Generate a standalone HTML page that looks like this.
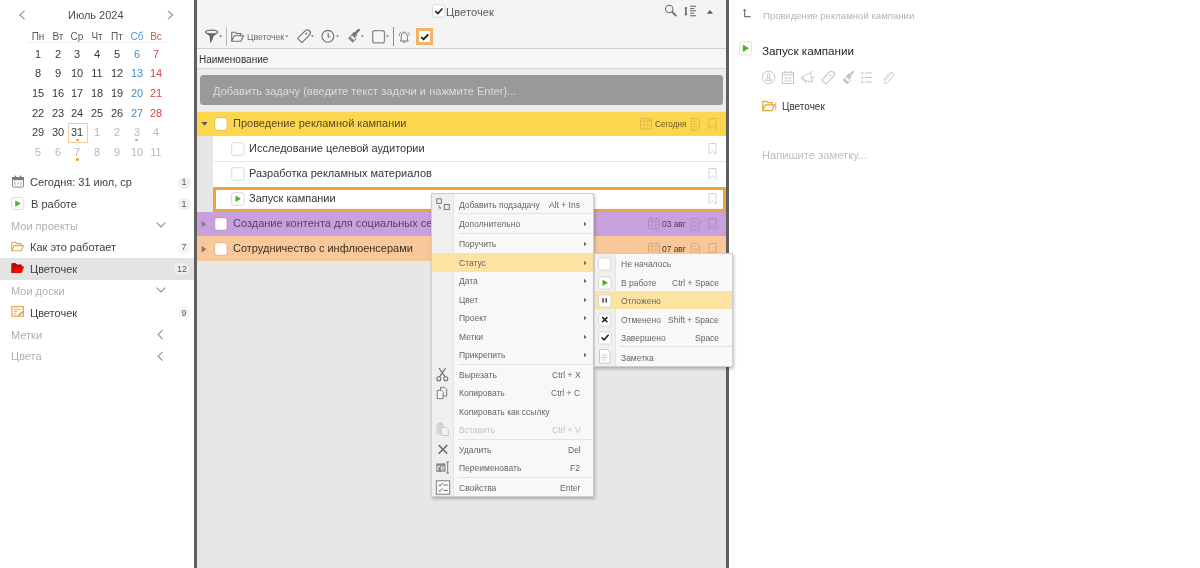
<!DOCTYPE html>
<html><head><meta charset="utf-8"><style>
html,body{margin:0;padding:0;width:1200px;height:568px;overflow:hidden;background:#fff;font-family:"Liberation Sans", sans-serif;}
.t{position:absolute;white-space:nowrap;will-change:transform;}
svg{overflow:visible}
</style></head><body>
<div style="position:absolute;left:0px;top:0px;width:194px;height:568px;background:#fff"></div>
<div style="position:absolute;left:194px;top:0px;width:3px;height:568px;background:#5f5f5f"></div>
<div style="position:absolute;left:197px;top:0px;width:529px;height:568px;background:#e7e7e7"></div>
<div style="position:absolute;left:726px;top:0px;width:3px;height:568px;background:#5f5f5f"></div>
<div style="position:absolute;left:729px;top:0px;width:471px;height:568px;background:#fff"></div>
<svg style="position:absolute;left:15px;top:8px" width="15" height="14" viewBox="15 8 15 14"><polyline points="24.6,10.8 19.8,15 24.6,19.2" fill="none" stroke="#8f8f8f" stroke-width="1.1"/></svg>
<svg style="position:absolute;left:163px;top:8px" width="15" height="14" viewBox="163 8 15 14"><polyline points="167.8,10.8 172.6,15 167.8,19.2" fill="none" stroke="#8f8f8f" stroke-width="1.1"/></svg>
<div class="t" style="left:68.3px;top:9.69px;font-size:11px;line-height:11px;color:#4d4d4d;">Июль 2024</div>
<div class="t" style="left:-62.0px;width:200px;text-align:center;top:32.03px;font-size:10px;line-height:10px;color:#5a5a5a;">Пн</div>
<div class="t" style="left:-42.3px;width:200px;text-align:center;top:32.03px;font-size:10px;line-height:10px;color:#5a5a5a;">Вт</div>
<div class="t" style="left:-22.6px;width:200px;text-align:center;top:32.03px;font-size:10px;line-height:10px;color:#5a5a5a;">Ср</div>
<div class="t" style="left:-2.9px;width:200px;text-align:center;top:32.03px;font-size:10px;line-height:10px;color:#5a5a5a;">Чт</div>
<div class="t" style="left:16.8px;width:200px;text-align:center;top:32.03px;font-size:10px;line-height:10px;color:#5a5a5a;">Пт</div>
<div class="t" style="left:36.5px;width:200px;text-align:center;top:32.03px;font-size:10px;line-height:10px;color:#4a95cc;">Сб</div>
<div class="t" style="left:56.2px;width:200px;text-align:center;top:32.03px;font-size:10px;line-height:10px;color:#d9534f;">Вс</div>
<div style="position:absolute;left:27px;top:42px;width:140px;height:1px;background:#efefef"></div>
<div style="position:absolute;left:67.5px;top:123px;width:20px;height:20px;box-sizing:border-box;border:1px solid #f3cba6"></div>
<div class="t" style="left:-62.0px;width:200px;text-align:center;top:48.69px;font-size:11px;line-height:11px;color:#383838;">1</div>
<div class="t" style="left:-42.3px;width:200px;text-align:center;top:48.69px;font-size:11px;line-height:11px;color:#383838;">2</div>
<div class="t" style="left:-22.6px;width:200px;text-align:center;top:48.69px;font-size:11px;line-height:11px;color:#383838;">3</div>
<div class="t" style="left:-2.9px;width:200px;text-align:center;top:48.69px;font-size:11px;line-height:11px;color:#383838;">4</div>
<div class="t" style="left:16.8px;width:200px;text-align:center;top:48.69px;font-size:11px;line-height:11px;color:#383838;">5</div>
<div class="t" style="left:36.5px;width:200px;text-align:center;top:48.69px;font-size:11px;line-height:11px;color:#3f8fc9;">6</div>
<div class="t" style="left:56.2px;width:200px;text-align:center;top:48.69px;font-size:11px;line-height:11px;color:#d5474a;">7</div>
<div class="t" style="left:-62.0px;width:200px;text-align:center;top:68.39px;font-size:11px;line-height:11px;color:#383838;">8</div>
<div class="t" style="left:-42.3px;width:200px;text-align:center;top:68.39px;font-size:11px;line-height:11px;color:#383838;">9</div>
<div class="t" style="left:-22.6px;width:200px;text-align:center;top:68.39px;font-size:11px;line-height:11px;color:#383838;">10</div>
<div class="t" style="left:-2.9px;width:200px;text-align:center;top:68.39px;font-size:11px;line-height:11px;color:#383838;">11</div>
<div class="t" style="left:16.8px;width:200px;text-align:center;top:68.39px;font-size:11px;line-height:11px;color:#383838;">12</div>
<div class="t" style="left:36.5px;width:200px;text-align:center;top:68.39px;font-size:11px;line-height:11px;color:#3f8fc9;">13</div>
<div class="t" style="left:56.2px;width:200px;text-align:center;top:68.39px;font-size:11px;line-height:11px;color:#d5474a;">14</div>
<div class="t" style="left:-62.0px;width:200px;text-align:center;top:88.09px;font-size:11px;line-height:11px;color:#383838;">15</div>
<div class="t" style="left:-42.3px;width:200px;text-align:center;top:88.09px;font-size:11px;line-height:11px;color:#383838;">16</div>
<div class="t" style="left:-22.6px;width:200px;text-align:center;top:88.09px;font-size:11px;line-height:11px;color:#383838;">17</div>
<div class="t" style="left:-2.9px;width:200px;text-align:center;top:88.09px;font-size:11px;line-height:11px;color:#383838;">18</div>
<div class="t" style="left:16.8px;width:200px;text-align:center;top:88.09px;font-size:11px;line-height:11px;color:#383838;">19</div>
<div class="t" style="left:36.5px;width:200px;text-align:center;top:88.09px;font-size:11px;line-height:11px;color:#3f8fc9;">20</div>
<div class="t" style="left:56.2px;width:200px;text-align:center;top:88.09px;font-size:11px;line-height:11px;color:#d5474a;">21</div>
<div class="t" style="left:-62.0px;width:200px;text-align:center;top:107.79px;font-size:11px;line-height:11px;color:#383838;">22</div>
<div class="t" style="left:-42.3px;width:200px;text-align:center;top:107.79px;font-size:11px;line-height:11px;color:#383838;">23</div>
<div class="t" style="left:-22.6px;width:200px;text-align:center;top:107.79px;font-size:11px;line-height:11px;color:#383838;">24</div>
<div class="t" style="left:-2.9px;width:200px;text-align:center;top:107.79px;font-size:11px;line-height:11px;color:#383838;">25</div>
<div class="t" style="left:16.8px;width:200px;text-align:center;top:107.79px;font-size:11px;line-height:11px;color:#383838;">26</div>
<div class="t" style="left:36.5px;width:200px;text-align:center;top:107.79px;font-size:11px;line-height:11px;color:#3f8fc9;">27</div>
<div class="t" style="left:56.2px;width:200px;text-align:center;top:107.79px;font-size:11px;line-height:11px;color:#d5474a;">28</div>
<div class="t" style="left:-62.0px;width:200px;text-align:center;top:127.49px;font-size:11px;line-height:11px;color:#383838;">29</div>
<div class="t" style="left:-42.3px;width:200px;text-align:center;top:127.49px;font-size:11px;line-height:11px;color:#383838;">30</div>
<div class="t" style="left:-22.6px;width:200px;text-align:center;top:127.49px;font-size:11px;line-height:11px;color:#383838;">31</div>
<div class="t" style="left:-2.9px;width:200px;text-align:center;top:127.49px;font-size:11px;line-height:11px;color:#b9b9b9;">1</div>
<div class="t" style="left:16.8px;width:200px;text-align:center;top:127.49px;font-size:11px;line-height:11px;color:#b9b9b9;">2</div>
<div class="t" style="left:36.5px;width:200px;text-align:center;top:127.49px;font-size:11px;line-height:11px;color:#b9b9b9;">3</div>
<div class="t" style="left:56.2px;width:200px;text-align:center;top:127.49px;font-size:11px;line-height:11px;color:#b9b9b9;">4</div>
<div class="t" style="left:-62.0px;width:200px;text-align:center;top:147.19px;font-size:11px;line-height:11px;color:#b9b9b9;">5</div>
<div class="t" style="left:-42.3px;width:200px;text-align:center;top:147.19px;font-size:11px;line-height:11px;color:#b9b9b9;">6</div>
<div class="t" style="left:-22.6px;width:200px;text-align:center;top:147.19px;font-size:11px;line-height:11px;color:#b9b9b9;">7</div>
<div class="t" style="left:-2.9px;width:200px;text-align:center;top:147.19px;font-size:11px;line-height:11px;color:#b9b9b9;">8</div>
<div class="t" style="left:16.8px;width:200px;text-align:center;top:147.19px;font-size:11px;line-height:11px;color:#b9b9b9;">9</div>
<div class="t" style="left:36.5px;width:200px;text-align:center;top:147.19px;font-size:11px;line-height:11px;color:#b9b9b9;">10</div>
<div class="t" style="left:56.2px;width:200px;text-align:center;top:147.19px;font-size:11px;line-height:11px;color:#b9b9b9;">11</div>
<div style="position:absolute;left:76.15px;top:138.75px;width:2.5px;height:2.5px;background:#f39a35;border-radius:50%"></div>
<div style="position:absolute;left:135.25px;top:138.75px;width:2.5px;height:2.5px;background:#f39a35;border-radius:50%"></div>
<div style="position:absolute;left:76.15px;top:158.25px;width:2.5px;height:2.5px;background:#f39a35;border-radius:50%"></div>
<svg style="position:absolute;left:10px;top:174px" width="16" height="16" viewBox="10 174 16 16"><rect x="12.5" y="177.5" width="11" height="9.6" rx="1" fill="#fff" stroke="#8a8a8a" stroke-width="1"/><rect x="12" y="177" width="12" height="3.2" fill="#7d7d7d"/><rect x="14.6" y="175.6" width="1.6" height="2.4" fill="#7d7d7d"/><rect x="19.8" y="175.6" width="1.6" height="2.4" fill="#7d7d7d"/><rect x="14.5" y="181.5" width="1.2" height="4" fill="#bbb"/><rect x="20.3" y="181.5" width="1.2" height="4" fill="#bbb"/><rect x="17.3" y="182.5" width="1.4" height="2" fill="#bbb"/></svg>
<div class="t" style="left:30.2px;top:177.19px;font-size:11px;line-height:11px;color:#404040;">Сегодня: 31 июл, ср</div>
<div style="position:absolute;left:177.8px;top:176.5px;width:13px;height:12px;background:#efefef;border-radius:6px"></div>
<div class="t" style="left:84.3px;width:200px;text-align:center;top:178.18px;font-size:9px;line-height:9px;color:#5a5a5a;">1</div>
<svg style="position:absolute;left:10px;top:196px" width="16" height="15" viewBox="10 196 16 15"><rect x="11.7" y="197.5" width="12" height="12" rx="2" fill="#fff" stroke="#dedede"/><polygon points="15.2,200.4 21,203.6 15.2,206.8" fill="#4cb324"/></svg>
<div class="t" style="left:30.5px;top:198.99px;font-size:11px;line-height:11px;color:#404040;">В работе</div>
<div style="position:absolute;left:177.8px;top:198px;width:13px;height:12px;background:#efefef;border-radius:6px"></div>
<div class="t" style="left:84.3px;width:200px;text-align:center;top:199.68px;font-size:9px;line-height:9px;color:#5a5a5a;">1</div>
<div class="t" style="left:11.0px;top:220.99px;font-size:11px;line-height:11px;color:#b0b0b0;">Мои проекты</div>
<svg style="position:absolute;left:154px;top:220px" width="14" height="10" viewBox="154 220 14 10"><polyline points="156.6,222.6 161,227 165.4,222.6" fill="none" stroke="#8f8f8f" stroke-width="1.1"/></svg>
<svg style="position:absolute;left:10px;top:240px" width="16" height="13" viewBox="10 240 16 13"><path d="M11.8 250.8 V242.3 H15.6 L16.7 243.6 H21.2 V245.6 M11.8 250.8 L14 245.6 H23.4 L21.2 250.8 Z" fill="none" stroke="#e3a546" stroke-width="1.1" stroke-linejoin="round"/></svg>
<div class="t" style="left:30.4px;top:242.39px;font-size:11px;line-height:11px;color:#404040;">Как это работает</div>
<div style="position:absolute;left:177.8px;top:241.5px;width:13px;height:12px;background:#f6f6f6;border-radius:6px"></div>
<div class="t" style="left:84.3px;width:200px;text-align:center;top:243.18px;font-size:9px;line-height:9px;color:#5a5a5a;">7</div>
<div style="position:absolute;left:0px;top:258px;width:194px;height:22px;background:#e3e3e3"></div>
<svg style="position:absolute;left:10px;top:262px" width="16" height="12" viewBox="10 262 16 12"><path d="M11.8 272.5 V263.6 H15.8 L16.9 264.9 H21.4 V266.8 H14 Z" fill="#c00" stroke="#a00" stroke-width="0.8"/><path d="M11.8 272.5 L14 266.8 H23.6 L21.4 272.5 Z" fill="#f00" stroke="#b00" stroke-width="0.8" stroke-linejoin="round"/></svg>
<div class="t" style="left:30.4px;top:263.99px;font-size:11px;line-height:11px;color:#404040;">Цветочек</div>
<div style="position:absolute;left:174.0px;top:263px;width:15px;height:12px;background:#efefef;border-radius:6px"></div>
<div class="t" style="left:81.5px;width:200px;text-align:center;top:264.68px;font-size:9px;line-height:9px;color:#5a5a5a;">12</div>
<div class="t" style="left:11.0px;top:286.19px;font-size:11px;line-height:11px;color:#b0b0b0;">Мои доски</div>
<svg style="position:absolute;left:154px;top:285px" width="14" height="10" viewBox="154 285 14 10"><polyline points="156.6,287.6 161,292 165.4,287.6" fill="none" stroke="#8f8f8f" stroke-width="1.1"/></svg>
<svg style="position:absolute;left:10px;top:305px" width="16" height="14" viewBox="10 305 16 14"><rect x="11.8" y="306.6" width="11.6" height="9.6" fill="#fff6e3" stroke="#e3a546" stroke-width="1.1"/><path d="M13.8 309.3 H20.5 M13.8 311.6 H17 M13.8 313.8 H16" stroke="#d9a050" stroke-width="0.9"/><path d="M18 315 L22.5 311 L23.5 312 L19 316 Z" fill="#c99a5a"/></svg>
<div class="t" style="left:30.4px;top:307.99px;font-size:11px;line-height:11px;color:#404040;">Цветочек</div>
<div style="position:absolute;left:177.8px;top:307px;width:13px;height:12px;background:#f6f6f6;border-radius:6px"></div>
<div class="t" style="left:84.3px;width:200px;text-align:center;top:308.68px;font-size:9px;line-height:9px;color:#5a5a5a;">9</div>
<div class="t" style="left:11.0px;top:329.89px;font-size:11px;line-height:11px;color:#b0b0b0;">Метки</div>
<svg style="position:absolute;left:155px;top:328px" width="11" height="13" viewBox="155 328 11 13"><polyline points="162.5,330.2 158.1,334.6 162.5,339" fill="none" stroke="#8f8f8f" stroke-width="1.1"/></svg>
<div class="t" style="left:11.0px;top:351.19px;font-size:11px;line-height:11px;color:#b0b0b0;">Цвета</div>
<svg style="position:absolute;left:155px;top:350px" width="11" height="13" viewBox="155 350 11 13"><polyline points="162.5,351.8 158.1,356.2 162.5,360.6" fill="none" stroke="#8f8f8f" stroke-width="1.1"/></svg>
<div style="position:absolute;left:197px;top:0px;width:529px;height:48px;background:#f4f4f4"></div>
<div style="position:absolute;left:197px;top:48px;width:529px;height:1px;background:#d0d0d0"></div>
<div style="position:absolute;left:197px;top:49px;width:529px;height:19px;background:#f6f6f6"></div>
<div style="position:absolute;left:197px;top:68px;width:529px;height:1px;background:#d6d6d6"></div>
<div style="position:absolute;left:197px;top:69px;width:529px;height:42px;background:#ededed"></div>
<div class="t" style="left:199.0px;top:55.33px;font-size:10px;line-height:10px;color:#333;">Наименование</div>
<svg style="position:absolute;left:431px;top:3px" width="16" height="16" viewBox="431 3 16 16"><rect x="432.5" y="4.8" width="12.4" height="12.4" rx="2" fill="#fff" stroke="#d9d9d9"/><polyline points="435.3,11.1 437.9,13.6 442.4,8.4" fill="none" stroke="#222" stroke-width="1.6"/></svg>
<div class="t" style="left:445.8px;top:6.92px;font-size:11.2px;line-height:11.2px;color:#5a5a5a;">Цветочек</div>
<svg style="position:absolute;left:663px;top:3px" width="16" height="16" viewBox="663 3 16 16"><circle cx="669.2" cy="9" r="3.7" fill="none" stroke="#6f6f6f" stroke-width="1.1"/><line x1="671.9" y1="11.7" x2="676.2" y2="16" stroke="#6f6f6f" stroke-width="1.9"/></svg>
<svg style="position:absolute;left:683px;top:4px" width="15" height="14" viewBox="683 4 15 14"><rect x="685" y="8" width="1.7" height="6.5" fill="#6f6f6f"/><ellipse cx="685.85" cy="8" rx="1.3" ry="1.1" fill="#6f6f6f"/><ellipse cx="685.85" cy="14.5" rx="1.3" ry="1.1" fill="#6f6f6f"/><rect x="690" y="5.7" width="6" height="1.1" fill="#6f6f6f"/><rect x="690" y="8" width="4.2" height="1" fill="#6f6f6f"/><rect x="690" y="10.2" width="6" height="1.1" fill="#6f6f6f"/><rect x="690" y="12.7" width="4.2" height="1" fill="#6f6f6f"/><rect x="690" y="15.2" width="6" height="1.1" fill="#6f6f6f"/></svg>
<svg style="position:absolute;left:705px;top:8px" width="10" height="7" viewBox="705 8 10 7"><polygon points="706.8,13.7 709.9,10 713,13.7" fill="#5a5a5a"/></svg>
<svg style="position:absolute;left:203px;top:28px" width="21" height="17" viewBox="203 28 21 17"><path d="M205.8 32.4 Q208 35 209.6 36 L210.2 43.3 Q212.6 41 213.6 36 Q215.8 34.6 217.6 32.4 Q211.7 35.4 205.8 32.4 Z" fill="#676767"/><ellipse cx="211.7" cy="32" rx="6.1" ry="1.9" fill="#eee" stroke="#6a6a6a" stroke-width="1.2"/><polygon points="219.2,35.6 222.0,35.6 220.6,37.300000000000004" fill="#666"/></svg>
<div style="position:absolute;left:226px;top:27px;width:1px;height:19px;background:#b8b8b8"></div>
<svg style="position:absolute;left:229px;top:29px" width="17" height="15" viewBox="229 29 17 15"><path d="M231.7 41.2 V32.3 H235.6 L236.7 33.6 H240.9 V35.8 M231.7 41.2 L234.2 35.8 H243.5 L241 41.2 Z" fill="none" stroke="#707070" stroke-width="1.1" stroke-linejoin="round"/></svg>
<div class="t" style="left:246.5px;top:32.84px;font-size:8.7px;line-height:8.7px;color:#6a6a6a;">Цветочек</div>
<svg style="position:absolute;left:284px;top:34px" width="6" height="4" viewBox="284 34 6 4"><polygon points="285.6,35.6 288.40000000000003,35.6 287.0,37.300000000000004" fill="#666"/></svg>
<svg style="position:absolute;left:295px;top:28px" width="21" height="17" viewBox="295 28 21 17"><path d="M297.6 38.3 L305.3 30.6 A3.05 3.05 0 0 1 309.6 34.9 L301.9 42.6 Z" fill="none" stroke="#707070" stroke-width="1.1" stroke-linejoin="round"/><circle cx="306.4" cy="33.7" r="0.9" fill="#707070"/><polygon points="311,35.6 313.8,35.6 312.4,37.300000000000004" fill="#666"/></svg>
<svg style="position:absolute;left:320px;top:28px" width="21" height="17" viewBox="320 28 21 17"><circle cx="327.9" cy="36.3" r="5.9" fill="none" stroke="#707070" stroke-width="1.1"/><path d="M328.2 33.1 V37 H330.4" fill="none" stroke="#707070" stroke-width="1.2"/><polygon points="336.1,35.6 338.90000000000003,35.6 337.5,37.300000000000004" fill="#666"/></svg>
<svg style="position:absolute;left:346px;top:28px" width="20" height="17" viewBox="346 28 20 17"><path d="M348.6 38.2 L352 34.8 L356 38.8 L352.6 42.2 Z" fill="#f4f4f4" stroke="#707070" stroke-width="1"/><path d="M350.3 36.5 L354.3 40.5 L352.6 42.2 L348.6 38.2 Z" fill="#8a8a8a"/><path d="M351.5 34.2 L354 31.7 L357.3 35 L354.8 37.5 Z" fill="#7a7a7a"/><line x1="355.5" y1="33.2" x2="358.8" y2="29.9" stroke="#6a6a6a" stroke-width="2.2" stroke-linecap="round"/><polygon points="361,35.6 363.8,35.6 362.4,37.300000000000004" fill="#666"/></svg>
<svg style="position:absolute;left:370px;top:28px" width="21" height="17" viewBox="370 28 21 17"><rect x="372.7" y="30.7" width="11.8" height="12.2" rx="2.2" fill="#f6f6f6" stroke="#8a8a8a" stroke-width="1.3"/><polygon points="386,35.6 388.8,35.6 387.4,37.300000000000004" fill="#666"/></svg>
<div style="position:absolute;left:393px;top:27px;width:1px;height:19px;background:#8a8a8a"></div>
<svg style="position:absolute;left:397px;top:29px" width="15" height="16" viewBox="397 29 15 16"><path d="M400.3 41 L401.2 40 V36.6 Q401.2 32.6 404.3 32.4 Q407.4 32.6 407.4 36.6 V40 L408.3 41 Z" fill="#f6f6f6" stroke="#707070" stroke-width="0.95" stroke-linejoin="round"/><path d="M403 42.1 H405.6" stroke="#707070" stroke-width="1"/><path d="M404.3 32.4 V31.4" stroke="#707070" stroke-width="0.9"/><path d="M399.2 36 Q399.2 33.4 401 31.8 M409.4 36 Q409.4 33.4 407.6 31.8" fill="none" stroke="#888" stroke-width="0.9"/></svg>
<div style="position:absolute;left:416px;top:28px;width:17px;height:17px;box-sizing:border-box;background:#fffdf9;border:3px solid #f1b466"></div>
<svg style="position:absolute;left:418px;top:30px" width="13" height="13" viewBox="418 30 13 13"><polyline points="421.3,37.1 423.6,39.3 428.3,34.4" fill="none" stroke="#111" stroke-width="1.8"/></svg>
<div style="position:absolute;left:200px;top:75px;width:523px;height:30px;background:#999;border-radius:3.5px"></div>
<div class="t" style="left:212.8px;top:85.80px;font-size:11.1px;line-height:11.1px;color:#dcdcdc;">Добавить задачу (введите текст задачи и нажмите Enter)...</div>
<div style="position:absolute;left:197px;top:111.6px;width:529px;height:24.4px;background:#fcd64f"></div>
<svg style="position:absolute;left:200px;top:119px" width="10" height="9" viewBox="200 119 10 9"><polygon points="201.4,121.9 207.6,121.9 204.5,125.8" fill="#5a5a5a"/></svg>
<svg style="position:absolute;left:214px;top:117px" width="14" height="14" viewBox="214 117 14 14"><rect x="214.7" y="117.7" width="12.4" height="12.6" rx="2.2" fill="#fff" stroke="#e3c055"/></svg>
<div class="t" style="left:232.5px;top:117.99px;font-size:11px;line-height:11px;color:#5a4a1e;">Проведение рекламной кампании</div>
<div style="position:absolute;left:213px;top:136px;width:513px;height:125px;background:#fff"></div>
<div style="position:absolute;left:213px;top:161px;width:513px;height:1px;background:#e6e6e6"></div>
<svg style="position:absolute;left:231px;top:142px" width="14" height="14" viewBox="231 142 14 14"><rect x="231.7" y="142.7" width="12.4" height="12.6" rx="2.2" fill="#fff" stroke="#d8d8d8"/></svg>
<div class="t" style="left:249.2px;top:143.19px;font-size:11px;line-height:11px;color:#363636;">Исследование целевой аудитории</div>
<svg style="position:absolute;left:231px;top:167px" width="14" height="14" viewBox="231 167 14 14"><rect x="231.7" y="167.7" width="12.4" height="12.6" rx="2.2" fill="#fff" stroke="#d8d8d8"/></svg>
<div class="t" style="left:249.2px;top:168.19px;font-size:11px;line-height:11px;color:#363636;">Разработка рекламных материалов</div>
<div style="position:absolute;left:213px;top:186.6px;width:513px;height:25px;box-sizing:border-box;border:3px solid #efa43b;background:#fff"></div>
<svg style="position:absolute;left:231px;top:192px" width="14" height="14" viewBox="231 192 14 14"><rect x="231.7" y="192.7" width="12.4" height="12.6" rx="2.2" fill="#fff" stroke="#d8d8d8"/><polygon points="235.5,195.6 241,198.8 235.5,202" fill="#4cb324"/></svg>
<div class="t" style="left:249.2px;top:193.19px;font-size:11px;line-height:11px;color:#363636;">Запуск кампании</div>
<div style="position:absolute;left:197px;top:211.6px;width:529px;height:24.8px;background:#c8a1dc"></div>
<svg style="position:absolute;left:199px;top:218px" width="9" height="12" viewBox="199 218 9 12"><polygon points="201.6,220.8 206.4,224.2 201.6,227.6" fill="#8a7a92"/></svg>
<svg style="position:absolute;left:214px;top:217px" width="14" height="14" viewBox="214 217 14 14"><rect x="214.7" y="217.7" width="12.4" height="12.6" rx="2.2" fill="#fff" stroke="#b890cc"/></svg>
<div class="t" style="left:232.5px;top:218.19px;font-size:11px;line-height:11px;color:#5a3d6c;">Создание контента для социальных сетей</div>
<div style="position:absolute;left:197px;top:236px;width:529px;height:25px;background:#f8c89b"></div>
<svg style="position:absolute;left:199px;top:243px" width="9" height="12" viewBox="199 243 9 12"><polygon points="201.6,245.8 206.4,249.2 201.6,252.6" fill="#8a7a6a"/></svg>
<svg style="position:absolute;left:214px;top:242px" width="14" height="14" viewBox="214 242 14 14"><rect x="214.7" y="242.7" width="12.4" height="12.6" rx="2.2" fill="#fff" stroke="#e6b285"/></svg>
<div class="t" style="left:232.5px;top:243.19px;font-size:11px;line-height:11px;color:#3a3020;">Сотрудничество с инфлюенсерами</div>
<svg style="position:absolute;left:640px;top:117px" width="13" height="14" viewBox="640 117 13 14"><rect x="640.5" y="118.5" width="11" height="10.5" rx="1" fill="none" stroke="#dbb94a"/><line x1="640.5" y1="121" x2="651.5" y2="121" stroke="#dbb94a"/><line x1="643" y1="117" x2="643" y2="119.5" stroke="#dbb94a"/><line x1="649" y1="117" x2="649" y2="119.5" stroke="#dbb94a"/><line x1="644.2" y1="121" x2="644.2" y2="129" stroke="#dbb94a" stroke-width="0.6"/><line x1="647.8" y1="121" x2="647.8" y2="129" stroke="#dbb94a" stroke-width="0.6"/><line x1="640.5" y1="125" x2="651.5" y2="125" stroke="#dbb94a" stroke-width="0.6"/></svg>
<div class="t" style="left:654.6px;top:121.06px;font-size:8.2px;line-height:8.2px;color:#6a5a20;">Сегодня</div>
<svg style="position:absolute;left:690px;top:118px" width="11" height="13" viewBox="690 118 11 13"><path d="M691.3 118.5 h6 l2 2 v9.5 h-8 z" fill="none" stroke="#dbb94a"/><line x1="693" y1="121.5" x2="696" y2="121.5" stroke="#dbb94a" stroke-width="0.9"/><line x1="693" y1="124" x2="697.5" y2="124" stroke="#dbb94a" stroke-width="0.9"/><line x1="693" y1="126.5" x2="697.5" y2="126.5" stroke="#dbb94a" stroke-width="0.9"/></svg>
<svg style="position:absolute;left:707.5px;top:117.5px" width="10.0" height="13.0" viewBox="707.5 117.5 10.0 13.0"><path d="M708.5 118.0 h7 v10.5 l-3.5 -3 l-3.5 3 z" fill="none" stroke="#dbb94a" stroke-width="1"/></svg>
<svg style="position:absolute;left:707.5px;top:142.5px" width="10.0" height="13.0" viewBox="707.5 142.5 10.0 13.0"><path d="M708.5 143.0 h7 v10.5 l-3.5 -3 l-3.5 3 z" fill="none" stroke="#d3d3d3" stroke-width="1"/></svg>
<svg style="position:absolute;left:707.5px;top:167.5px" width="10.0" height="13.0" viewBox="707.5 167.5 10.0 13.0"><path d="M708.5 168.0 h7 v10.5 l-3.5 -3 l-3.5 3 z" fill="none" stroke="#d3d3d3" stroke-width="1"/></svg>
<svg style="position:absolute;left:707.5px;top:192.5px" width="10.0" height="13.0" viewBox="707.5 192.5 10.0 13.0"><path d="M708.5 193.0 h7 v10.5 l-3.5 -3 l-3.5 3 z" fill="none" stroke="#d3d3d3" stroke-width="1"/></svg>
<svg style="position:absolute;left:648px;top:217px" width="13" height="14" viewBox="648 217 13 14"><rect x="648.5" y="218.5" width="11" height="10.5" rx="1" fill="none" stroke="#b38ac6"/><line x1="648.5" y1="221" x2="659.5" y2="221" stroke="#b38ac6"/><line x1="651" y1="217" x2="651" y2="219.5" stroke="#b38ac6"/><line x1="657" y1="217" x2="657" y2="219.5" stroke="#b38ac6"/><line x1="652.2" y1="221" x2="652.2" y2="229" stroke="#b38ac6" stroke-width="0.6"/><line x1="655.8" y1="221" x2="655.8" y2="229" stroke="#b38ac6" stroke-width="0.6"/><line x1="648.5" y1="225" x2="659.5" y2="225" stroke="#b38ac6" stroke-width="0.6"/></svg>
<div class="t" style="left:661.8px;top:220.42px;font-size:8.6px;line-height:8.6px;color:#4f3a64;letter-spacing:-0.1px">03 авг</div>
<svg style="position:absolute;left:690px;top:218px" width="11" height="13" viewBox="690 218 11 13"><path d="M691.3 218.5 h6 l2 2 v9.5 h-8 z" fill="none" stroke="#b38ac6"/><line x1="693" y1="221.5" x2="696" y2="221.5" stroke="#b38ac6" stroke-width="0.9"/><line x1="693" y1="224" x2="697.5" y2="224" stroke="#b38ac6" stroke-width="0.9"/><line x1="693" y1="226.5" x2="697.5" y2="226.5" stroke="#b38ac6" stroke-width="0.9"/></svg>
<svg style="position:absolute;left:707.5px;top:217.5px" width="10.0" height="13.0" viewBox="707.5 217.5 10.0 13.0"><path d="M708.5 218.0 h7 v10.5 l-3.5 -3 l-3.5 3 z" fill="none" stroke="#b38ac6" stroke-width="1"/></svg>
<svg style="position:absolute;left:648px;top:242px" width="13" height="14" viewBox="648 242 13 14"><rect x="648.5" y="243.5" width="11" height="10.5" rx="1" fill="none" stroke="#d9a979"/><line x1="648.5" y1="246" x2="659.5" y2="246" stroke="#d9a979"/><line x1="651" y1="242" x2="651" y2="244.5" stroke="#d9a979"/><line x1="657" y1="242" x2="657" y2="244.5" stroke="#d9a979"/><line x1="652.2" y1="246" x2="652.2" y2="254" stroke="#d9a979" stroke-width="0.6"/><line x1="655.8" y1="246" x2="655.8" y2="254" stroke="#d9a979" stroke-width="0.6"/><line x1="648.5" y1="250" x2="659.5" y2="250" stroke="#d9a979" stroke-width="0.6"/></svg>
<div class="t" style="left:661.8px;top:245.42px;font-size:8.6px;line-height:8.6px;color:#4a3a1e;letter-spacing:-0.1px">07 авг</div>
<svg style="position:absolute;left:690px;top:243px" width="11" height="13" viewBox="690 243 11 13"><path d="M691.3 243.5 h6 l2 2 v9.5 h-8 z" fill="none" stroke="#d9a979"/><line x1="693" y1="246.5" x2="696" y2="246.5" stroke="#d9a979" stroke-width="0.9"/><line x1="693" y1="249" x2="697.5" y2="249" stroke="#d9a979" stroke-width="0.9"/><line x1="693" y1="251.5" x2="697.5" y2="251.5" stroke="#d9a979" stroke-width="0.9"/></svg>
<svg style="position:absolute;left:707.5px;top:242.5px" width="10.0" height="13.0" viewBox="707.5 242.5 10.0 13.0"><path d="M708.5 243.0 h7 v10.5 l-3.5 -3 l-3.5 3 z" fill="none" stroke="#d9a979" stroke-width="1"/></svg>
<svg style="position:absolute;left:740px;top:6px" width="14" height="14" viewBox="740 6 14 14"><polygon points="742.7,11 744.6,8.8 746.5,11" fill="#777"/><polyline points="744.6,10 744.6,16.6 750.8,16.6" fill="none" stroke="#777" stroke-width="1.15"/></svg>
<div class="t" style="left:762.5px;top:11.07px;font-size:9.6px;line-height:9.6px;color:#b3b3b3;">Проведение рекламной кампании</div>
<svg style="position:absolute;left:738px;top:40px" width="16" height="17" viewBox="738 40 16 17"><rect x="739.5" y="41.7" width="12.2" height="13.2" rx="2" fill="#fff" stroke="#dedede"/><polygon points="742.8,44.6 749,48.3 742.8,52" fill="#4cb324"/></svg>
<div class="t" style="left:762.0px;top:44.70px;font-size:11.7px;line-height:11.7px;color:#262626;">Запуск кампании</div>
<svg style="position:absolute;left:760px;top:69px" width="18" height="17" viewBox="760 69 18 17"><circle cx="768.5" cy="77.3" r="6.3" fill="none" stroke="#c6c6c6" stroke-width="1"/><circle cx="768.5" cy="75.2" r="1.7" fill="none" stroke="#c6c6c6"/><path d="M767.6 77 V79 H765.8 V80.6 H771.2 V79 H769.4 V77" fill="none" stroke="#c6c6c6" stroke-width="0.9"/></svg>
<svg style="position:absolute;left:780px;top:69px" width="16" height="17" viewBox="780 69 16 17"><rect x="782.3" y="72.3" width="11.2" height="11.2" fill="none" stroke="#c6c6c6"/><line x1="782.3" y1="74.8" x2="793.5" y2="74.8" stroke="#c6c6c6"/><line x1="784.8" y1="70.8" x2="784.8" y2="73.3" stroke="#c6c6c6"/><line x1="791" y1="70.8" x2="791" y2="73.3" stroke="#c6c6c6"/><path d="M784 78 h8 M784 80.8 h8 M786.3 76.5 v5.5 M789.3 76.5 v5.5" stroke="#c6c6c6" stroke-width="0.6"/></svg>
<svg style="position:absolute;left:799px;top:69px" width="18" height="17" viewBox="799 69 18 17"><path d="M802 76.5 L810.5 73 L812.5 82 L805 80.5 Z" fill="none" stroke="#c6c6c6" stroke-width="1"/><path d="M802 76.5 Q800.5 78 802.2 79.6 L805 80.5" fill="none" stroke="#c6c6c6"/><path d="M810.5 73 L813.5 70.5 M812 78 L815 77.2" stroke="#c6c6c6"/><path d="M805 80.5 L806.2 83.5" stroke="#c6c6c6"/></svg>
<svg style="position:absolute;left:819px;top:69px" width="17" height="17" viewBox="819 69 17 17"><path d="M821.6 79.8 L829.3 72.1 A3.05 3.05 0 0 1 833.6 76.4 L825.9 84.1 Z" fill="none" stroke="#c6c6c6" stroke-width="1.1" stroke-linejoin="round"/><circle cx="830.4" cy="75.2" r="0.9" fill="#c6c6c6"/></svg>
<svg style="position:absolute;left:840px;top:69px" width="17" height="17" viewBox="840 69 17 17"><path d="M843 80 L846.4 76.6 L850.4 80.6 L847 84 Z" fill="#fff" stroke="#c6c6c6" stroke-width="1"/><path d="M844.7 78.3 L848.7 82.3 L847 84 L843 80 Z" fill="#c6c6c6"/><path d="M845.9 76 L848.4 73.5 L851.7 76.8 L849.2 79.3 Z" fill="#c6c6c6"/><line x1="849.9" y1="75" x2="853.2" y2="71.7" stroke="#c6c6c6" stroke-width="2.2" stroke-linecap="round"/></svg>
<svg style="position:absolute;left:859px;top:69px" width="16" height="17" viewBox="859 69 16 17"><circle cx="862.3" cy="73" r="1" fill="#c6c6c6"/><circle cx="862.3" cy="77.5" r="1" fill="#c6c6c6"/><circle cx="862.3" cy="82" r="1" fill="#c6c6c6"/><path d="M865 73 h7 M865 77.5 h7 M865 82 h7" stroke="#c6c6c6" stroke-width="1.1"/></svg>
<svg style="position:absolute;left:880px;top:69px" width="15" height="17" viewBox="880 69 15 17"><path d="M890.5 74.5 L885 80.8 Q883.6 82.7 885 83.5 Q886.5 84.2 888 82.3 L892.6 76.5 Q894.2 74 892.6 72.6 Q891 71.5 889 73.8 L883.6 80" fill="none" stroke="#c6c6c6" stroke-width="1"/></svg>
<svg style="position:absolute;left:760px;top:98px" width="18" height="15" viewBox="760 98 18 15"><path d="M762.8 110.6 V101.3 H766.6 L767.7 102.6 H772.2 V104.8 M762.8 110.6 L765.2 104.8 H774.6 L772.2 110.6 Z" fill="none" stroke="#e0a23a" stroke-width="1.2" stroke-linejoin="round"/><rect x="775.2" y="102" width="1" height="8.5" fill="#f3a6a0"/></svg>
<div class="t" style="left:782.0px;top:102.03px;font-size:10px;line-height:10px;color:#333;">Цветочек</div>
<div class="t" style="left:762.3px;top:149.92px;font-size:11.2px;line-height:11.2px;color:#bdbdbd;">Напишите заметку...</div>
<div style="position:absolute;left:431px;top:193px;width:163px;height:304px;box-sizing:border-box;background:#f8f8f8;border:1px solid #cfcfcf;box-shadow:1px 2px 3px rgba(0,0,0,0.25)"></div>
<div style="position:absolute;left:432px;top:194px;width:21px;height:302px;background:#efefef"></div>
<div style="position:absolute;left:453px;top:194px;width:1px;height:302px;background:#e3e3e3"></div>
<div style="position:absolute;left:432px;top:253px;width:161px;height:19px;background:#fde3a2"></div>
<div class="t" style="left:458.6px;top:200.70px;font-size:8.5px;line-height:8.5px;color:#666;">Добавить подзадачу</div>
<div class="t" style="right:619.7px;top:200.70px;font-size:8.5px;line-height:8.5px;color:#666;">Alt + Ins</div>
<div class="t" style="left:458.6px;top:220.20px;font-size:8.5px;line-height:8.5px;color:#666;">Дополнительно</div>
<svg style="position:absolute;left:582px;top:220px" width="7" height="8" viewBox="582 220 7 8"><polygon points="584,221.8 586.6,224 584,226.2" fill="#6a6a6a"/></svg>
<div class="t" style="left:458.6px;top:239.70px;font-size:8.5px;line-height:8.5px;color:#666;">Поручить</div>
<svg style="position:absolute;left:582px;top:239.5px" width="7" height="8.0" viewBox="582 239.5 7 8.0"><polygon points="584,241.3 586.6,243.5 584,245.7" fill="#6a6a6a"/></svg>
<div class="t" style="left:458.6px;top:258.70px;font-size:8.5px;line-height:8.5px;color:#666;">Статус</div>
<svg style="position:absolute;left:582px;top:258.5px" width="7" height="8.0" viewBox="582 258.5 7 8.0"><polygon points="584,260.3 586.6,262.5 584,264.7" fill="#6a6a6a"/></svg>
<div class="t" style="left:458.6px;top:277.20px;font-size:8.5px;line-height:8.5px;color:#666;">Дата</div>
<svg style="position:absolute;left:582px;top:277px" width="7" height="8" viewBox="582 277 7 8"><polygon points="584,278.8 586.6,281 584,283.2" fill="#6a6a6a"/></svg>
<div class="t" style="left:458.6px;top:295.70px;font-size:8.5px;line-height:8.5px;color:#666;">Цвет</div>
<svg style="position:absolute;left:582px;top:295.5px" width="7" height="8.0" viewBox="582 295.5 7 8.0"><polygon points="584,297.3 586.6,299.5 584,301.7" fill="#6a6a6a"/></svg>
<div class="t" style="left:458.6px;top:314.20px;font-size:8.5px;line-height:8.5px;color:#666;">Проект</div>
<svg style="position:absolute;left:582px;top:314px" width="7" height="8" viewBox="582 314 7 8"><polygon points="584,315.8 586.6,318 584,320.2" fill="#6a6a6a"/></svg>
<div class="t" style="left:458.6px;top:332.70px;font-size:8.5px;line-height:8.5px;color:#666;">Метки</div>
<svg style="position:absolute;left:582px;top:332.5px" width="7" height="8.0" viewBox="582 332.5 7 8.0"><polygon points="584,334.3 586.6,336.5 584,338.7" fill="#6a6a6a"/></svg>
<div class="t" style="left:458.6px;top:351.20px;font-size:8.5px;line-height:8.5px;color:#666;">Прикрепить</div>
<svg style="position:absolute;left:582px;top:351px" width="7" height="8" viewBox="582 351 7 8"><polygon points="584,352.8 586.6,355 584,357.2" fill="#6a6a6a"/></svg>
<div class="t" style="left:458.6px;top:370.70px;font-size:8.5px;line-height:8.5px;color:#666;">Вырезать</div>
<div class="t" style="right:619.7px;top:370.70px;font-size:8.5px;line-height:8.5px;color:#666;">Ctrl + X</div>
<div class="t" style="left:458.6px;top:389.20px;font-size:8.5px;line-height:8.5px;color:#666;">Копировать</div>
<div class="t" style="right:619.7px;top:389.20px;font-size:8.5px;line-height:8.5px;color:#666;">Ctrl + C</div>
<div class="t" style="left:458.6px;top:407.70px;font-size:8.5px;line-height:8.5px;color:#666;">Копировать как ссылку</div>
<div class="t" style="left:458.6px;top:426.20px;font-size:8.5px;line-height:8.5px;color:#c4c4c4;">Вставить</div>
<div class="t" style="right:619.7px;top:426.20px;font-size:8.5px;line-height:8.5px;color:#c4c4c4;">Ctrl + V</div>
<div class="t" style="left:458.6px;top:445.70px;font-size:8.5px;line-height:8.5px;color:#666;">Удалить</div>
<div class="t" style="right:619.7px;top:445.70px;font-size:8.5px;line-height:8.5px;color:#666;">Del</div>
<div class="t" style="left:458.6px;top:464.20px;font-size:8.5px;line-height:8.5px;color:#666;">Переименовать</div>
<div class="t" style="right:619.7px;top:464.20px;font-size:8.5px;line-height:8.5px;color:#666;">F2</div>
<div class="t" style="left:458.6px;top:483.70px;font-size:8.5px;line-height:8.5px;color:#666;">Свойства</div>
<div class="t" style="right:619.7px;top:483.70px;font-size:8.5px;line-height:8.5px;color:#666;">Enter</div>
<div style="position:absolute;left:458px;top:213px;width:134px;height:1px;background:#e3e3e3"></div>
<div style="position:absolute;left:458px;top:233px;width:134px;height:1px;background:#e3e3e3"></div>
<div style="position:absolute;left:458px;top:364px;width:134px;height:1px;background:#e3e3e3"></div>
<div style="position:absolute;left:458px;top:439px;width:134px;height:1px;background:#e3e3e3"></div>
<div style="position:absolute;left:458px;top:477px;width:134px;height:1px;background:#e3e3e3"></div>
<svg style="position:absolute;left:434px;top:196px" width="18" height="16" viewBox="434 196 18 16"><rect x="436.8" y="198.8" width="4.6" height="4.6" fill="none" stroke="#6f6f6f" stroke-width="0.9"/><rect x="444.3" y="204.5" width="5" height="5" fill="none" stroke="#6f6f6f" stroke-width="0.9"/><path d="M438.6 205.6 Q438.8 207.3 440 207.8" fill="none" stroke="#6f6f6f" stroke-width="0.9"/><polygon points="439.6,206.4 441.4,208 439.6,209.2" fill="#6f6f6f"/></svg>
<svg style="position:absolute;left:434px;top:366px" width="18" height="17" viewBox="434 366 18 17"><circle cx="438.8" cy="378.8" r="2" fill="none" stroke="#6f6f6f" stroke-width="1.1"/><circle cx="445.8" cy="378.8" r="2" fill="none" stroke="#6f6f6f" stroke-width="1.1"/><path d="M439.6 376.9 L445.6 368 M445 376.9 L439 368" stroke="#6f6f6f" stroke-width="1.2"/></svg>
<svg style="position:absolute;left:434px;top:385px" width="18" height="17" viewBox="434 385 18 17"><path d="M437.3 390.3 h3.8 l2 2 v6.3 h-5.8 z" fill="#f8f8f8" stroke="#6f6f6f" stroke-width="0.9"/><path d="M440.5 390.3 v-3 h4 l2.2 2.2 v6.5 h-3.6" fill="none" stroke="#6f6f6f" stroke-width="0.9"/></svg>
<svg style="position:absolute;left:434px;top:421px" width="18" height="18" viewBox="434 421 18 18"><rect x="436.5" y="424" width="7.5" height="10.5" fill="#d8d8d8"/><rect x="438.5" y="422.5" width="3.5" height="2.5" fill="#c6c6c6"/><path d="M441.5 427.5 h4.5 l2.3 2.3 v5.7 h-6.8 z" fill="#f3f3f3" stroke="#c8c8c8"/></svg>
<svg style="position:absolute;left:434px;top:441px" width="18" height="17" viewBox="434 441 18 17"><path d="M438.7 445.1 L447.2 453.6 M447.2 445.1 L438.7 453.6" stroke="#6f6f6f" stroke-width="1.5"/></svg>
<svg style="position:absolute;left:433px;top:460px" width="20" height="16" viewBox="433 460 20 16"><rect x="436.3" y="463.4" width="9.2" height="8.4" fill="#858585"/><path d="M437.8 470.6 V466.3 M437.8 467.2 Q438.6 466 440.2 466.1" fill="none" stroke="#eee" stroke-width="1.1"/><path d="M441.2 468.3 H444.2 Q444.2 466.1 442.7 466.1 Q441.1 466.1 441.1 468.3 Q441.1 470.5 442.8 470.5 Q443.7 470.5 444.1 469.9" fill="none" stroke="#eee" stroke-width="1"/><path d="M446.4 462 h2.6 M447.7 462 v11 M446.4 473 h2.6" stroke="#6f6f6f" stroke-width="0.9"/></svg>
<svg style="position:absolute;left:433px;top:479px" width="20" height="18" viewBox="433 479 20 18"><rect x="436.3" y="480.8" width="13.4" height="13.4" fill="#fafafa" stroke="#6f6f6f" stroke-width="0.9"/><path d="M438.4 484.5 L440 486 L442.5 483 M438.4 490 L440 491.5 L442.5 488.5" fill="none" stroke="#6f6f6f" stroke-width="1"/><path d="M443.5 485 h4.2 M443.5 490.5 h4.2" stroke="#6f6f6f"/></svg>
<div style="position:absolute;left:594px;top:253px;width:139px;height:114px;box-sizing:border-box;background:#f8f8f8;border:1px solid #cfcfcf;box-shadow:1px 2px 3px rgba(0,0,0,0.25)"></div>
<div style="position:absolute;left:595px;top:254px;width:20px;height:112px;background:#efefef"></div>
<div style="position:absolute;left:615px;top:254px;width:1px;height:112px;background:#e3e3e3"></div>
<div style="position:absolute;left:595px;top:291px;width:137px;height:18px;background:#fde3a2"></div>
<div class="t" style="left:620.8px;top:259.70px;font-size:8.5px;line-height:8.5px;color:#666;">Не началось</div>
<div class="t" style="left:620.8px;top:278.70px;font-size:8.5px;line-height:8.5px;color:#666;">В работе</div>
<div class="t" style="right:481.0px;top:278.70px;font-size:8.5px;line-height:8.5px;color:#666;">Ctrl + Space</div>
<div class="t" style="left:620.8px;top:296.70px;font-size:8.5px;line-height:8.5px;color:#666;">Отложено</div>
<div class="t" style="left:620.8px;top:315.70px;font-size:8.5px;line-height:8.5px;color:#666;">Отменено</div>
<div class="t" style="right:481.0px;top:315.70px;font-size:8.5px;line-height:8.5px;color:#666;">Shift + Space</div>
<div class="t" style="left:620.8px;top:334.20px;font-size:8.5px;line-height:8.5px;color:#666;">Завершено</div>
<div class="t" style="right:481.0px;top:334.20px;font-size:8.5px;line-height:8.5px;color:#666;">Space</div>
<div class="t" style="left:620.8px;top:353.70px;font-size:8.5px;line-height:8.5px;color:#666;">Заметка</div>
<div style="position:absolute;left:620px;top:346px;width:112px;height:1px;background:#e3e3e3"></div>
<svg style="position:absolute;left:597px;top:256.5px" width="16" height="15.0" viewBox="597 256.5 16 15.0"><rect x="598.6" y="257.5" width="12.4" height="12" rx="2" fill="#fff" stroke="#d8d8d8"/></svg>
<svg style="position:absolute;left:597px;top:275.5px" width="16" height="15.0" viewBox="597 275.5 16 15.0"><rect x="598.6" y="276.5" width="12.4" height="12" rx="2" fill="#fff" stroke="#d8d8d8"/><polygon points="602.5,279 608,282.2 602.5,285.4" fill="#4cb324"/></svg>
<svg style="position:absolute;left:597px;top:293.5px" width="16" height="15.0" viewBox="597 293.5 16 15.0"><rect x="598.6" y="294.5" width="12.4" height="12" rx="2" fill="#fff" stroke="#d8d8d8"/><rect x="602.3" y="297.6" width="1.6" height="4.6" fill="#555"/><rect x="605.4" y="297.6" width="1.6" height="4.6" fill="#555"/></svg>
<svg style="position:absolute;left:597px;top:312.5px" width="16" height="15.0" viewBox="597 312.5 16 15.0"><rect x="598.6" y="313.5" width="12.4" height="12" rx="2" fill="#fff" stroke="#d8d8d8"/><path d="M602.2 316.6 L607.4 321.8 M607.4 316.6 L602.2 321.8" stroke="#222" stroke-width="1.5"/></svg>
<svg style="position:absolute;left:597px;top:331px" width="16" height="15" viewBox="597 331 16 15"><rect x="598.6" y="332" width="12.4" height="12" rx="2" fill="#fff" stroke="#d8d8d8"/><polyline points="601.6,337.5 604,339.8 608.6,334.8" fill="none" stroke="#222" stroke-width="1.6"/></svg>
<svg style="position:absolute;left:597px;top:348px" width="16" height="18" viewBox="597 348 16 18"><path d="M599.5 349.5 h7.5 l3 3 v10.8 h-10.5 z" fill="#fff" stroke="#c8c8c8"/><path d="M601.8 355 h5.5 M601.8 357.5 h5.5 M601.8 360 h3.5" stroke="#bdbdbd" stroke-width="0.8"/></svg>
</body></html>
